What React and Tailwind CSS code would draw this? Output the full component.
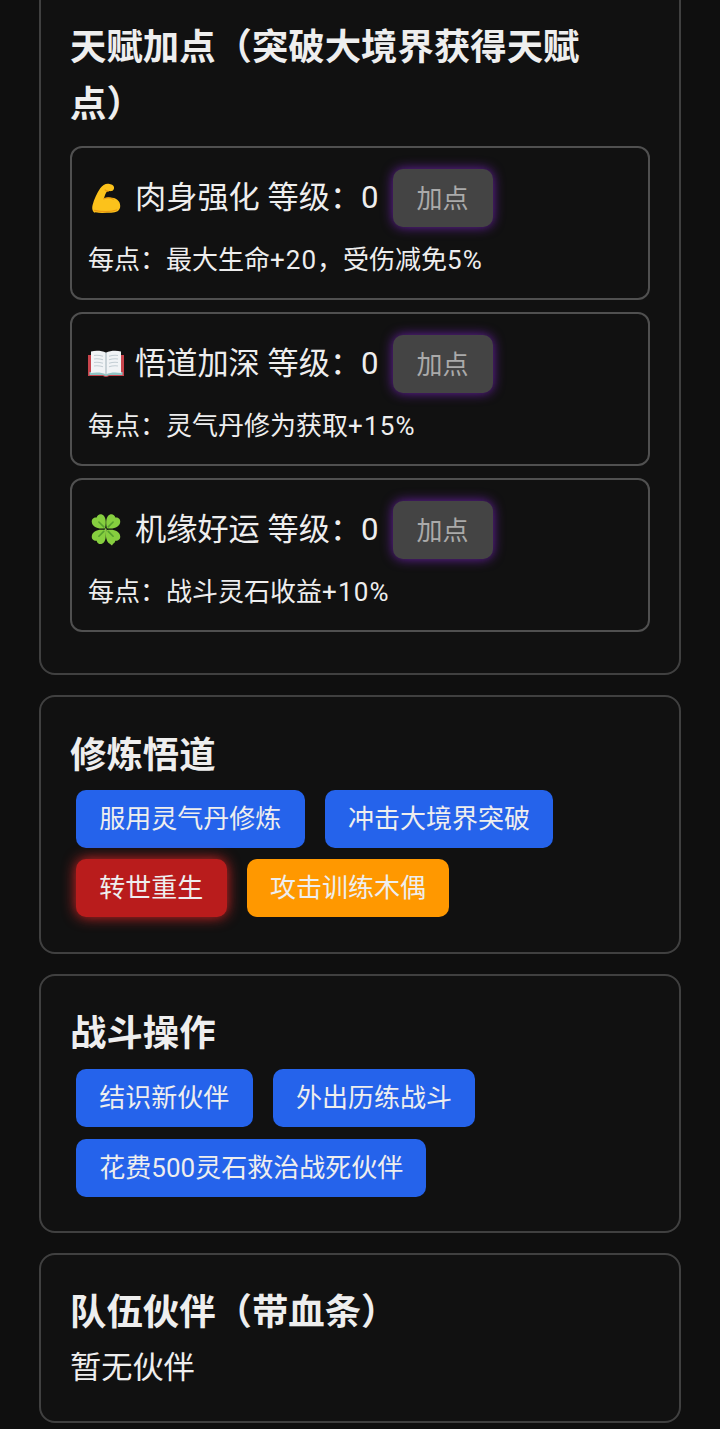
const Muscle = () => (
  <svg width="32" height="34" viewBox="0 0 36 38" className="shrink-0 mx-[2px]">
    <path d="M5.500 35.500C2.500 34 2 30.500 3 26.500 4.500 20.500 8 13 11.500 8 14 4.500 17.500 2.500 21 3c3 .4 5.500 1.500 6 3.500.5 2.300-1 4.200-3 4.700-1.500.4-3-.2-4.500.2-1.800 1.500-2.800 5-4 8.600 2-1 4.500-1.500 7-1.500 6.500 0 11.500 3.500 11.500 9.500 0 5.500-4.500 7.500-10 7.500-6.500 0-12.500.8-18-.5z" fill="#fcc21b" />
    <path d="M20.500 11.300c-1.500 0-2.500-.3-3.500-1.300M15.500 20c3-1.500 7.500-1.500 11 .5M5 33c7 1.500 17 2 25-.5" fill="none" stroke="#ed9b12" strokeWidth="1.400" strokeLinecap="round" />
  </svg>
)

const Book = () => (
  <svg width="36" height="36" viewBox="0 0 36 36" className="shrink-0">
    <path d="M0 9h36v21H21q-3 2-6 0H0z" fill="#c8444c" />
    <path d="M1.500 26h33v3H21q-3 1.800-6 0H1.500z" fill="#8fc4c4" />
    <path d="M3 5.500c5-1.300 11-.8 15 1.200 4-2 10-2.500 15-1.200V27c-5-1-11-.7-15 1.200C14 26.300 8 26 3 27z" fill="#f1f4f6" />
    <path d="M18 6.700v21.500" stroke="#9fb0b8" strokeWidth="1" />
    <path d="M6 9.500c3-.5 6-.2 9 .8M6 13c3-.5 6-.2 9 .8M6 16.500c3-.5 6-.2 9 .8M6 20c3-.5 6-.2 9 .8M30 9.500c-3-.5-6-.2-9 .8M30 13c-3-.5-6-.2-9 .8M30 16.500c-3-.5-6-.2-9 .8M30 20c-3-.5-6-.2-9 .8" fill="none" stroke="#c3ced4" strokeWidth="1.200" />
  </svg>
)

const Clover = () => (
  <svg width="32" height="34" viewBox="0 0 36 38" className="shrink-0 mx-[2px]">
    <path d="M17.500 18c.5 6 2.500 12 7 17" fill="none" stroke="#8bc34a" strokeWidth="2.200" strokeLinecap="round" />
    <g fill="#86cf3f">
      <path d="M17 17C9 18.500 2.500 15.500 2 10 1.700 6.500 4.500 4.500 7.500 5 8 2 11 .5 13.500 1.500 18 3.500 18.500 10 17 17z" />
      <path d="M19 17c8 1.500 14.500-1.500 15-7 .3-3.500-2.500-5.500-5.500-5C28 2 25 .5 22.500 1.500 18 3.500 17.500 10 19 17z" />
      <path d="M17 19C9 17.500 2.500 20.500 2 26c-.3 3.500 2.500 5.500 5.500 5 .5 3 3.500 4.500 6 3.500C18 32.500 18.500 26 17 19z" />
      <path d="M19 19c8-1.500 14.500 1.500 15 7 .3 3.500-2.500 5.500-5.500 5-.5 3-3.500 4.500-6 3.500C18 32.500 17.500 26 19 19z" />
    </g>
    <path d="M15.500 15.500L10 10M20.500 15.500L26 10M15.500 20.500L10 26M20.500 20.500L26 26" stroke="#559f2e" strokeWidth="1.800" strokeLinecap="round" />
  </svg>
)

const talents = [
  { icon: <Muscle />, name: '肉身强化', desc: <>每点：最大生命<span className="tracking-[1px]">+20</span>，受伤减免<span className="tracking-[1px]">5%</span></> },
  { icon: <Book />, name: '悟道加深', desc: <>每点：灵气丹修为获取<span className="tracking-[1.200px]">+15%</span></> },
  { icon: <Clover />, name: '机缘好运', desc: <>每点：战斗灵石收益<span className="tracking-[1.200px]">+10%</span></> },
]

const Card = ({ title, className = '', children }) => (
  <section className={`border-2 border-[#404040] rounded-[16px] bg-[#111111] px-[29px] ${className}`}>
    <h3 className="max-w-[560px] text-[36.400px] leading-[57px] font-bold text-[#eeeeee]">{title}</h3>
    {children}
  </section>
)

const ActionButton = ({ color = 'bg-[#2563eb]', children }) => (
  <button className={`h-[58px] px-[23.300px] pt-[1px] rounded-[10px] text-[26px] text-[#eeeeee] ${color}`}>
    {children}
  </button>
)

export default function App() {
  return (
    <div
      className="h-[1429px] overflow-hidden bg-[#0f0f0f] px-[39px] flex flex-col gap-[20px] [text-spacing-trim:space-all]"
      style={{ fontFamily: 'Roboto, "Noto Sans CJK SC", sans-serif' }}
    >
      {/* first card is scrolled past the top */}
      <Card title="天赋加点（突破大境界获得天赋点）" className="-mt-[22px] pt-[39px] pb-[41px]">
        <div className="mt-[13px] flex flex-col gap-[12px]">
          {talents.map((t) => (
            <div key={t.name} className="h-[154px] border-2 border-[#505050] rounded-[12px] pl-[16px] pt-[21px]">
              <div className="flex items-center h-[58px] text-[31.200px] text-[#eeeeee]">
                {t.icon}
                <span className="ml-[11px]">{t.name} 等级：0</span>
                <button className="ml-[14px] w-[100px] h-[58px] pt-[2px] rounded-[10px] bg-[#444444] text-[26px] text-[#aaaaaa] shadow-[0_0_12px_#6b21a8]">
                  加点
                </button>
              </div>
              <p className="mt-[13px] text-[26px] leading-[40px] text-[#eeeeee]">{t.desc}</p>
            </div>
          ))}
        </div>
      </Card>

      <Card title="修炼悟道" className="pt-[30px] h-[259px]">
        <div className="mt-[6px] ml-[6px] flex flex-wrap gap-x-[20px] gap-y-[11px]">
          <ActionButton>服用灵气丹修炼</ActionButton>
          <ActionButton>冲击大境界突破</ActionButton>
          <ActionButton color="bg-[#b91c1c] shadow-[0_0_14px_#dc2626]">转世重生</ActionButton>
          <ActionButton color="bg-[#ff9800]">攻击训练木偶</ActionButton>
        </div>
      </Card>

      <Card title="战斗操作" className="pt-[29px] h-[259px]">
        <div className="mt-[7px] ml-[6px] flex flex-wrap gap-x-[20px] gap-y-[12px]">
          <ActionButton>结识新伙伴</ActionButton>
          <ActionButton>外出历练战斗</ActionButton>
          <ActionButton>花费500灵石救治战死伙伴</ActionButton>
        </div>
      </Card>

      <Card title="队伍伙伴（带血条）" className="pt-[29px] h-[170px]">
        <p className="mt-[2px] text-[31.200px] leading-[50px] text-[#eeeeee]">暂无伙伴</p>
      </Card>
    </div>
  )
}
